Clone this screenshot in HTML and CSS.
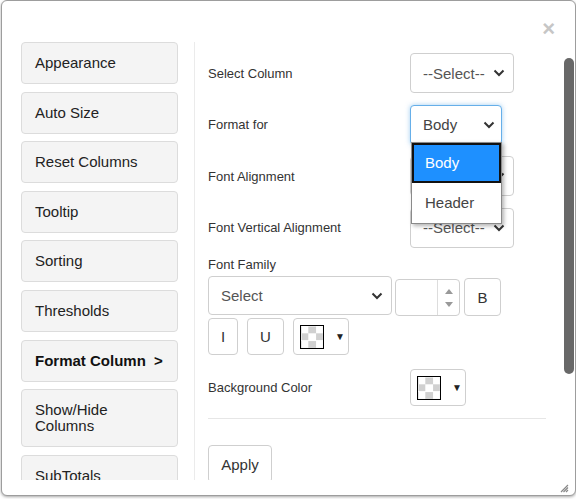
FILE: index.html
```html
<!DOCTYPE html>
<html>
<head>
<meta charset="utf-8">
<link rel="stylesheet" href="styles.css">
</head>
<body>
<div class="dialog">
  <div class="header"><span class="close">×</span></div>
  <div class="body">
    <nav class="nav">
      <div class="nav-item">Appearance</div>
      <div class="nav-item">Auto Size</div>
      <div class="nav-item">Reset Columns</div>
      <div class="nav-item">Tooltip</div>
      <div class="nav-item">Sorting</div>
      <div class="nav-item">Thresholds</div>
      <div class="nav-item active">Format Column <span class="arrow">&gt;</span></div>
      <div class="nav-item">Show/Hide<br>Columns</div>
      <div class="nav-item">SubTotals</div>
    </nav>
    <div class="content">
      <div class="row">
        <span class="label">Select Column</span>
        <div class="select w104"><span>--Select--</span><svg class="chev" width="12" height="8" viewBox="0 0 12 8"><path d="M1.5 1.5 L6 6 L10.5 1.5" fill="none" stroke="#333" stroke-width="2"/></svg></div>
      </div>
      <div class="row">
        <span class="label">Format for</span>
        <div class="select-wrap">
          <div class="select focus w92"><span>Body</span><svg class="chev" width="12" height="8" viewBox="0 0 12 8"><path d="M1.5 1.5 L6 6 L10.5 1.5" fill="none" stroke="#333" stroke-width="2"/></svg></div>
          <ul class="dropdown">
            <li class="opt selected">Body</li>
            <li class="opt">Header</li>
          </ul>
        </div>
      </div>
      <div class="row">
        <span class="label">Font Alignment</span>
        <div class="select w104"><span>--Select--</span><svg class="chev" width="12" height="8" viewBox="0 0 12 8"><path d="M1.5 1.5 L6 6 L10.5 1.5" fill="none" stroke="#333" stroke-width="2"/></svg></div>
      </div>
      <div class="row">
        <span class="label">Font Vertical Alignment</span>
        <div class="select w104"><span>--Select--</span><svg class="chev" width="12" height="8" viewBox="0 0 12 8"><path d="M1.5 1.5 L6 6 L10.5 1.5" fill="none" stroke="#333" stroke-width="2"/></svg></div>
      </div>
      <div class="label ff">Font Family</div>
      <div class="tools">
        <div class="select fam"><span>Select</span><svg class="chev" width="12" height="8" viewBox="0 0 12 8"><path d="M1.5 1.5 L6 6 L10.5 1.5" fill="none" stroke="#333" stroke-width="2"/></svg></div>
        <div class="num">
          <div class="num-field"></div>
          <div class="spin">
            <svg width="8" height="5" viewBox="0 0 8 5"><path d="M0 5 L4 0 L8 5 Z" fill="#999"/></svg>
            <svg width="8" height="5" viewBox="0 0 8 5"><path d="M0 0 L4 5 L8 0 Z" fill="#999"/></svg>
          </div>
        </div>
        <div class="btn b">B</div>
      </div>
      <div class="tools second">
        <div class="btn i">I</div>
        <div class="btn u">U</div>
        <div class="btn color"><span class="swatch"></span><span class="tri">▼</span></div>
      </div>
      <div class="row bg">
        <span class="label">Background Color</span>
        <div class="btn color"><span class="swatch"></span><span class="tri">▼</span></div>
      </div>
      <div class="sep"></div>
      <div class="btn apply">Apply</div>
    </div>
  </div>
  <div class="thumb"></div>
  <svg class="grip" width="10" height="10" viewBox="0 0 10 10"><path d="M9 2 L2 9 M9 4.5 L4.5 9 M9 7 L7 9" stroke="#888" stroke-width="1.2"/></svg>
</div>
</body>
</html>
```

FILE: styles.css
```css
* { box-sizing: border-box; }
html, body { margin: 0; padding: 0; }
body {
  background: #ffffff;
  font-family: "Liberation Sans", Arial, sans-serif;
  width: 576px;
  height: 499px;
  overflow: hidden;
}
.dialog {
  position: relative;
  margin-left: 1px;
  width: 575px;
  height: 496px;
  border: 1px solid #9d9d9d;
  border-radius: 6px;
  background: #fff;
  box-shadow: 0 1px 3px rgba(0,0,0,0.35);
}
.header {
  height: 41px;
  position: relative;
}
.close {
  position: absolute;
  right: 20px;
  top: 17px;
  font-size: 22px;
  font-weight: bold;
  color: #c6c6c6;
  line-height: 22px;
}
.body {
  display: flex;
  height: 438px;
  overflow: hidden;
}
.nav {
  width: 193px;
  flex: none;
  padding-left: 19px;
  border-right: 1px solid #ebebeb;
}
.nav-item {
  width: 157px;
  padding: 12px 12px 12px 13px;
  line-height: 16px;
  font-size: 15px;
  color: #222;
  background: #f4f4f4;
  border: 1px solid #dcdcdc;
  border-radius: 4px;
  margin-bottom: 7.6px;
}
.nav-item.active { font-weight: bold; color: #111; }
.nav-item .arrow { margin-left: 4px; }
.content {
  flex: 1;
  padding: 11px 29px 0 13px;
  position: relative;
}
.row {
  display: flex;
  align-items: center;
  margin-bottom: 11.5px;
}
.label {
  width: 202px;
  flex: none;
  font-size: 13px;
  color: #333;
}
.select {
  height: 40px;
  border: 1px solid #cfcfcf;
  border-radius: 4px;
  display: flex;
  align-items: center;
  justify-content: space-between;
  padding: 0 8px 0 12px;
  font-size: 15px;
  color: #555;
  background: #fff;
}
.w104 { width: 104px; }
.w92 { width: 92px; padding-right: 6px; }
.select.focus {
  border-color: #66afe9;
  box-shadow: 0 0 5px rgba(102,175,233,0.6);
  color: #444;
}
.select-wrap { position: relative; }
.dropdown {
  position: absolute;
  top: 37px;
  left: 1px;
  width: 91px;
  margin: 0;
  padding: 0;
  list-style: none;
  background: #fff;
  border: 1px solid #8a8a8a;
  box-shadow: 2px 2px 4px rgba(0,0,0,0.3);
  z-index: 5;
}
.opt {
  height: 40px;
  line-height: 36px;
  padding-left: 11px;
  font-size: 15px;
  color: #444;
  border: 2px solid transparent;
}
.opt.selected {
  background: #1e90ff;
  color: #fff;
  border-color: #111;
}
.ff {
  margin-top: -2px;
  line-height: 16px;
  margin-bottom: 3px;
  width: auto;
}
.tools {
  display: flex;
  align-items: flex-start;
}
.tools .fam {
  width: 184px;
  height: 39px;
  margin-right: 3px;
}
.num {
  width: 65px;
  height: 37px;
  border: 1px solid #cfcfcf;
  border-radius: 4px;
  display: flex;
  margin-top: 3px;
  margin-right: 4px;
}
.num-field { flex: 1; border-right: 1px solid #ddd; }
.spin {
  width: 21px;
  display: flex;
  flex-direction: column;
  justify-content: center;
  align-items: center;
  gap: 8px;
}
.spin svg { display: block; }
.btn {
  height: 37px;
  border: 1px solid #cfcfcf;
  border-radius: 4px;
  display: flex;
  align-items: center;
  justify-content: center;
  font-size: 15px;
  color: #333;
  background: #fff;
}
.btn.b { width: 37px; height: 38px; margin-top: 2px; }
.second { margin-top: 2px; }
.btn.i { width: 30px; margin-right: 9px; }
.btn.u { width: 37px; margin-right: 9px; }
.btn.color {
  width: 56px;
  justify-content: flex-start;
  padding-left: 6px;
}
.swatch {
  width: 24px;
  height: 24px;
  border: 1px solid #000;
  background-color: #fff;
  background-image: conic-gradient(#d0d0d0 25%, #fff 0 50%, #d0d0d0 0 75%, #fff 0);
  background-size: 14.6px 14.6px;
  background-position: -7.3px -7.3px;
}
.tri {
  font-size: 10px;
  margin-left: 11px;
  color: #222;
}
.row.bg { margin-top: 14px; margin-bottom: 0; }
.sep {
  height: 1px;
  background: #e6e6e6;
  margin-top: 12px;
  margin-bottom: 26px;
}
.btn.apply {
  width: 64px;
  height: 38px;
}
.thumb {
  position: absolute;
  left: 562px;
  top: 57px;
  width: 10px;
  height: 316px;
  background: #686868;
  border-radius: 5px;
}
.grip {
  position: absolute;
  left: 557px;
  top: 482px;
}
```
